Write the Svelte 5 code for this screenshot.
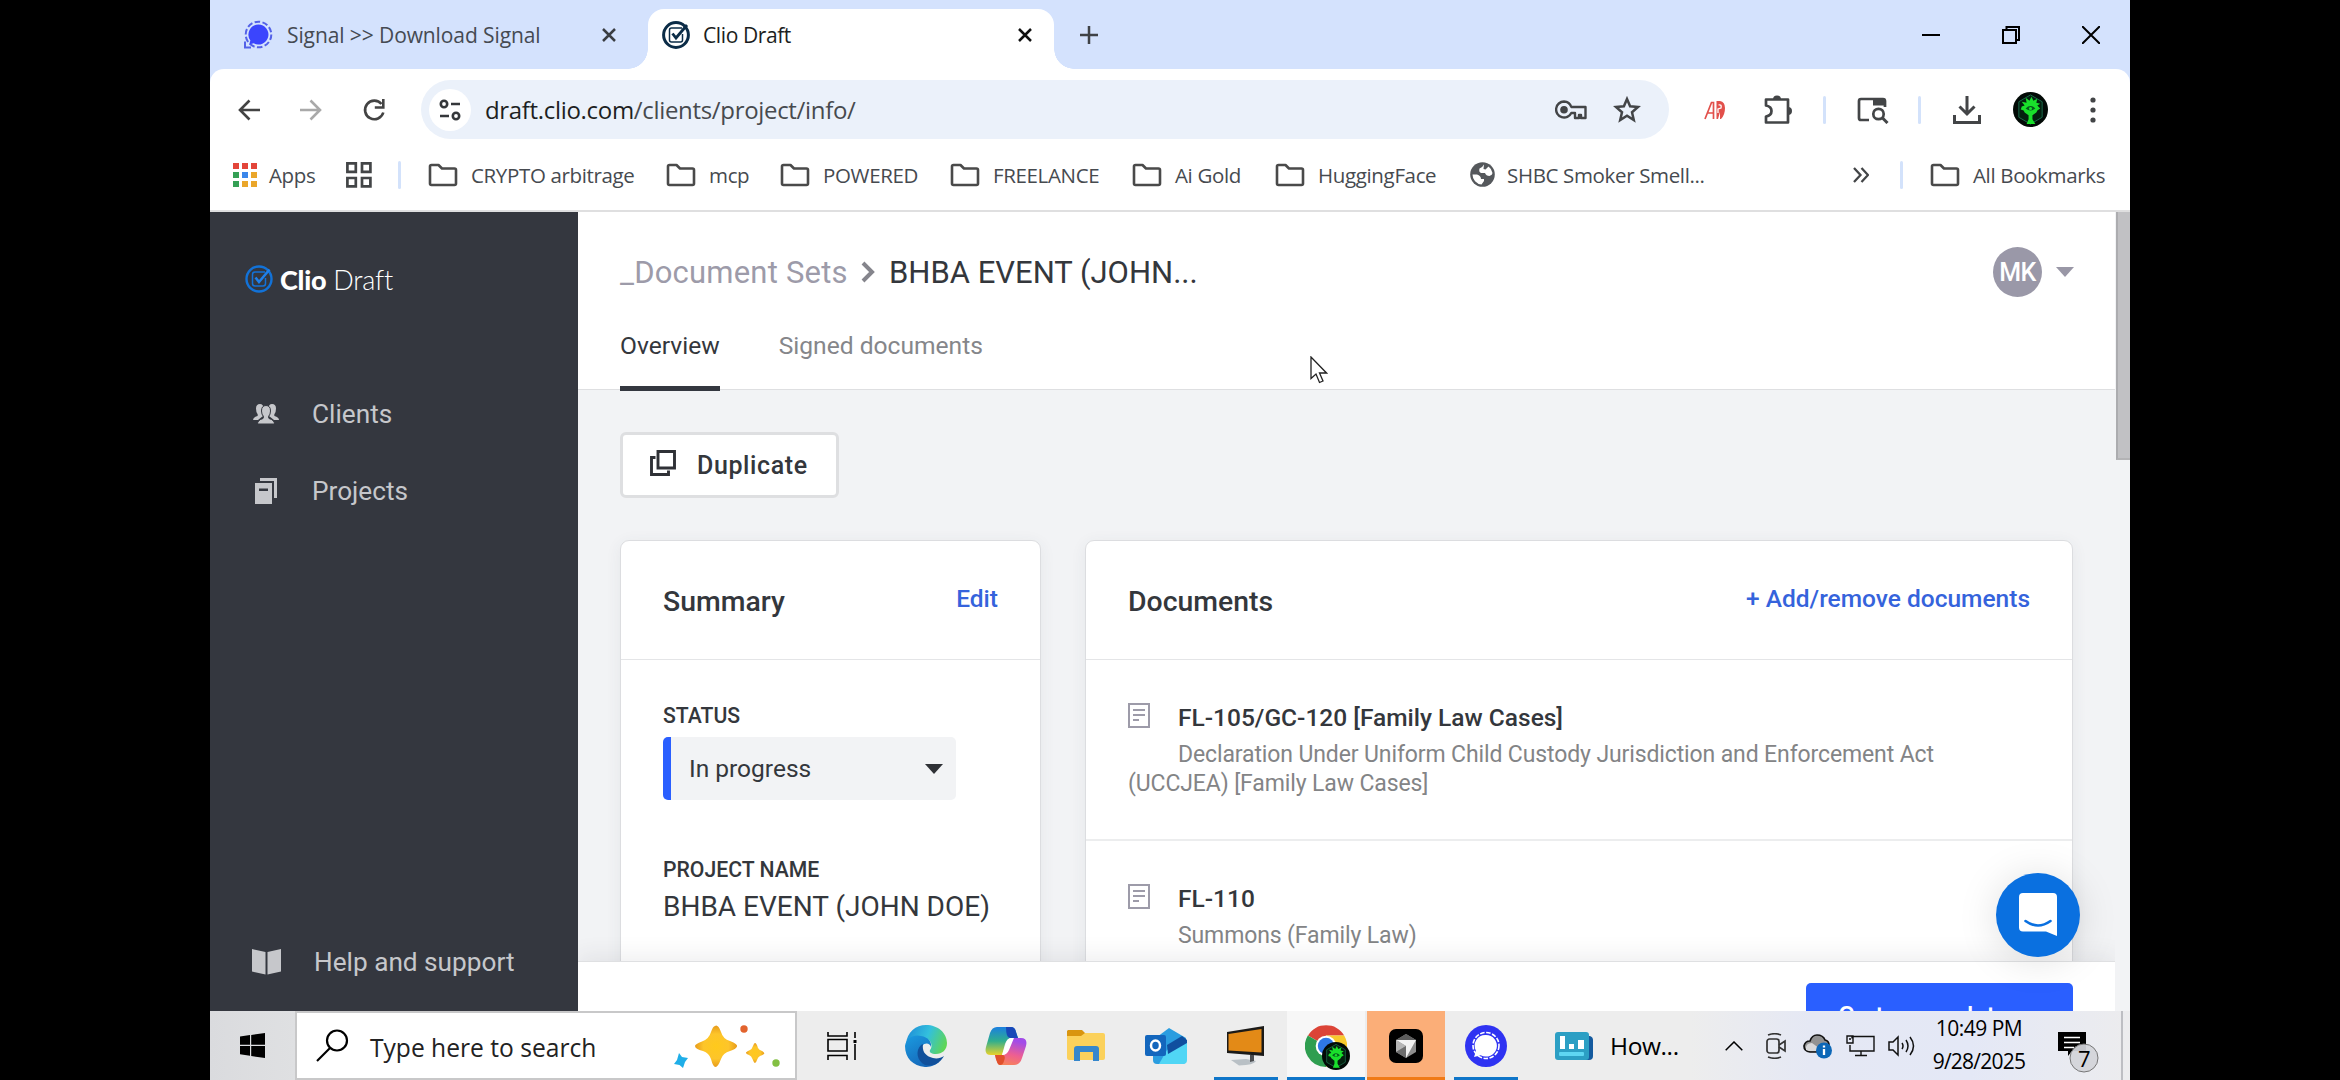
<script>
  const bookmarks = [
    { label: 'CRYPTO arbitrage', width: 238 },
    { label: 'mcp', width: 114 },
    { label: 'POWERED', width: 170 },
    { label: 'FREELANCE', width: 182 },
    { label: 'Ai Gold', width: 143 },
    { label: 'HuggingFace', width: 194 }
  ];

  const documents = [
    {
      title: 'FL-105/GC-120 [Family Law Cases]',
      text: 'Declaration Under Uniform Child Custody Jurisdiction and Enforcement Act (UCCJEA) [Family Law Cases]'
    },
    { title: 'FL-110', text: 'Summons (Family Law)' }
  ];

  const appColors = ['#e3453a', '#e3453a', '#e3453a', '#35a055', '#3b86ea', '#eaa62b', '#35a055', '#eaa62b', '#eaa62b'];
</script>

{#snippet folder()}
  <svg class="folder" width="30" height="24" viewBox="0 0 30 24">
    <path d="M2 3.5Q2 2 3.5 2H10.5L14 5.5H26.5Q28 5.5 28 7V20.5Q28 22 26.5 22H3.5Q2 22 2 20.5Z" fill="none" stroke="#4a4a4a" stroke-width="2.6" stroke-linejoin="round" />
  </svg>
{/snippet}

{#snippet tree(size)}
  <svg width={size} height={size} viewBox="0 0 36 36">
    <circle cx="18" cy="18" r="18" fill="#020a06" />
    <path d="M18 3 30 10V26L18 33 6 26V10Z" fill="#04200f" stroke="#1c6b4c" stroke-width="1" />
    <path d="M9 15 12 14 9 10 14 11 13 6 17 9 19 5 21 9 25 7 24 11 28 12 25 14 28 17 25 19 24 21 20 24 20 28 23 33 14 33 16 28 16 24 12 21 11 19 8 18Z" fill="#19e02b" />
    <path d="M13 17Q18 12 23 17Q18 21 13 17Z" fill="#055a1c" />
    <circle cx="18" cy="17" r="1.6" fill="#19e02b" />
  </svg>
{/snippet}

<div class="screen">
  <div class="window">
    <div class="tabstrip">
      <div class="tab">
        <svg class="fav" width="30" height="30" viewBox="0 0 30 30">
          <circle cx="15.5" cy="14.5" r="12.8" fill="none" stroke="#5361e8" stroke-width="2" stroke-dasharray="5.6 2.4" />
          <path d="M15.5 4.5a10 10 0 1 1-4.8 18.8L6.2 24.6 7.4 20.4A10 10 0 0 1 15.5 4.5Z" fill="#3b45fd" />
          <path d="M2 21.5V27.6H8" fill="none" stroke="#5361e8" stroke-width="2" />
        </svg>
        <span class="tab-title signal-title">Signal &gt;&gt; Download Signal</span>
        <svg class="tab-x" width="14" height="14" viewBox="0 0 14 14"><path d="M1 1 13 13M13 1 1 13" stroke="#3a3d42" stroke-width="2.5" /></svg>
      </div>
      <div class="tab active">
        <svg class="fav" width="28" height="28" viewBox="0 0 28 28">
          <circle cx="14" cy="14" r="12.400" fill="#fff" stroke="#0b2c47" stroke-width="3" />
          <path d="M20 7H9.500Q7.500 7 7.500 9V19Q7.500 21 9.500 21H18.500Q20.500 21 20.500 19V13" fill="none" stroke="#0b2c47" stroke-width="1.500" />
          <path d="M10.500 12.500 14 17 25 4" fill="none" stroke="#0b2c47" stroke-width="2.800" />
        </svg>
        <span class="tab-title clio-title">Clio Draft</span>
        <svg class="tab-x" width="14" height="14" viewBox="0 0 14 14"><path d="M1 1 13 13M13 1 1 13" stroke="#111" stroke-width="2.5" /></svg>
      </div>
      <svg class="newtab" width="18" height="18" viewBox="0 0 18 18"><path d="M9 0V18M0 9H18" stroke="#3f4246" stroke-width="2.5" /></svg>
      <div class="winctl">
        <svg width="18" height="18" viewBox="0 0 18 18"><path d="M0 9H18" stroke="#000" stroke-width="2" /></svg>
        <svg width="18" height="18" viewBox="0 0 18 18"><path d="M1 4H14V17H1ZM4.5 4V1H17V14H14" fill="none" stroke="#000" stroke-width="2" /></svg>
        <svg width="18" height="18" viewBox="0 0 18 18"><path d="M0 0 18 18M18 0 0 18" stroke="#000" stroke-width="2" /></svg>
      </div>
    </div>

    <div class="toolbar">
      <div class="navrow">
        <svg class="back" width="22" height="22" viewBox="0 0 22 22"><path d="M22 11H2M11.5 1.5 2 11 11.5 20.5" fill="none" stroke="#434343" stroke-width="2.6" /></svg>
        <svg class="forward" width="22" height="22" viewBox="0 0 22 22"><path d="M0 11H20M10.500 1.500 20 11 10.500 20.500" fill="none" stroke="#a9a9a9" stroke-width="2.6" /></svg>
        <svg class="reload" width="24" height="24" viewBox="0 0 24 24">
          <path d="M19.500 6A9.300 9.300 0 1 0 21.300 14.500" fill="none" stroke="#434343" stroke-width="2.6" />
          <path d="M21.300 1V9.500H12.800" fill="none" stroke="#434343" stroke-width="2.600" />
        </svg>
        <div class="omnibox">
          <span class="site">
            <svg width="22" height="22" viewBox="0 0 22 22" fill="none" stroke="#34373a" stroke-width="2.600">
              <circle cx="5" cy="5" r="3.200" /><path d="M12 5H21M1 17H10" /><circle cx="17" cy="17" r="3.200" />
            </svg>
          </span>
          <span class="url"><b>draft.clio.com</b>/clients/project/info/</span>
          <svg class="key" width="32" height="20" viewBox="0 0 32 20">
            <path d="M9 1.500a8 8 0 1 0 7.300 11.500H20V18H24V15H26V18H30.500V7H16.300A8 8 0 0 0 9 1.500Z" fill="none" stroke="#434547" stroke-width="2.400" stroke-linejoin="round" />
            <circle cx="9" cy="9.800" r="3.800" fill="#434547" />
          </svg>
          <svg class="star" width="28" height="27" viewBox="0 0 28 27"><path d="M14 3 17.100 10.300 25 11 19 16.200 20.800 24 14 19.800 7.200 24 9 16.200 3 11 10.900 10.300Z" fill="none" stroke="#434547" stroke-width="2.500" /></svg>
        </div>
        <svg class="ext" width="22" height="20" viewBox="0 0 22 20">
          <path d="M1 19 7.500 2.500H9.500V19M4 13H9" fill="none" stroke="#e2504b" stroke-width="1.700" />
          <path d="M12.500 1H16Q21 2 21 8Q21 15 17 19H16V12L14 19H12.500Z" fill="#e2504b" />
          <path d="M14.500 5Q18 4 17 8L14 9V13" fill="none" stroke="#fff" stroke-width="1.300" />
        </svg>
        <svg class="puzzle" width="32" height="30" viewBox="0 0 32 30">
          <path d="M3 4.500H25V27.500H3V21.500Q8.500 20.500 8.500 16Q8.500 11.500 3 10.500Z" fill="none" stroke="#434547" stroke-width="2.700" stroke-linejoin="round" />
          <path d="M10 4.500a4 4 0 0 1 8 0ZM25 12a4 4 0 0 1 0 8Z" fill="#434547" />
        </svg>
        <i class="divider"></i>
        <svg class="tabsearch" width="32" height="28" viewBox="0 0 32 28">
          <path d="M12 24H4Q2 24 2 22V5Q2 3 4 3H26Q28 3 28 5V11" fill="none" stroke="#434547" stroke-width="2.700" />
          <path d="M16 3H28V9.500H16Z" fill="#434547" />
          <circle cx="21.500" cy="18" r="5.200" fill="none" stroke="#434547" stroke-width="2.700" />
          <path d="M25.300 21.800 30.500 27" stroke="#434547" stroke-width="3" />
        </svg>
        <i class="divider two"></i>
        <svg class="download" width="28" height="28" viewBox="0 0 28 28"><path d="M14 0V17M6.500 10.500 14 18 21.500 10.500M1.500 19V26.500H26.500V19" fill="none" stroke="#434547" stroke-width="3" /></svg>
        <span class="profile">{@render tree(35)}</span>
        <svg class="dots" width="6" height="26" viewBox="0 0 6 26" fill="#434547"><circle cx="3" cy="3" r="2.600" /><circle cx="3" cy="13" r="2.600" /><circle cx="3" cy="23" r="2.600" /></svg>
      </div>

      <div class="bookmarks">
        <svg class="apps" width="24" height="24" viewBox="0 0 24 24">
          {#each appColors as color, i}
            <rect x={(i % 3) * 9} y={Math.floor(i / 3) * 9} width="6" height="6" fill={color} />
          {/each}
        </svg>
        <span class="bm-text apps-text">Apps</span>
        <svg class="quad" width="26" height="26" viewBox="0 0 26 26" fill="none" stroke="#434547" stroke-width="2.700"><path d="M1.400 1.400H9.800V9.800H1.400ZM16 1.400H24.400V9.800H16ZM1.400 16H9.800V24.400H1.400ZM16 16H24.400V24.400H16Z" /></svg>
        <i class="divider bm"></i>
        {#each bookmarks as item}
          <span class="bookmark" style:width="{item.width}px">{@render folder()}<span class="bm-text">{item.label}</span></span>
        {/each}
        <svg class="globe" width="25" height="25" viewBox="0 0 25 25">
          <circle cx="12.500" cy="12.500" r="12.300" fill="#55585c" />
          <path d="M14 2.500Q12 6 9.500 6.500Q8.500 10 11 11H15Q16 14 19.500 14Q22.500 13 22.500 11A10 10 0 0 0 18.500 4.500L15.500 7.500L13.500 7Z M2.500 12.500H7Q11 13.500 11 17H14V19L11.500 22.500A10 10 0 0 1 2.500 12.500Z" fill="#fff" />
        </svg>
        <span class="bm-text shbc">SHBC Smoker Smell...</span>
        <svg class="more" width="16" height="16" viewBox="0 0 16 16"><path d="M1 1 7.500 8 1 15M8.500 1 15 8 8.500 15" fill="none" stroke="#434547" stroke-width="2.300" /></svg>
        <i class="divider all"></i>
        <span class="bookmark">{@render folder()}<span class="bm-text">All Bookmarks</span></span>
      </div>
    </div>

    <div class="page">
      <aside>
        <div class="logo">
          <svg width="28" height="28" viewBox="0 0 28 28">
            <circle cx="14" cy="14" r="12.500" fill="none" stroke="#1272d8" stroke-width="2.400" />
            <path d="M20 7H10Q7.500 7 7.500 9.500V18.500Q7.500 21 10 21H18Q20.500 21 20.500 18.500V13" fill="none" stroke="#1272d8" stroke-width="1.500" />
            <path d="M10.500 12.500 14 17 24.500 4.500" fill="none" stroke="#1f80ea" stroke-width="2.600" />
          </svg>
          <span class="brand"><b>Clio</b> Draft</span>
        </div>
        <div class="side-item">
          <svg width="26" height="20" viewBox="0 0 26 20" fill="#c6c7cb">
            <path d="M7 0Q10.500 0 10.500 4.500Q10 8 9 9.500L10 12 5 16H0Q0 13.500 4.500 12Q5 11 4.500 10Q3 8 3 4.500Q3 0 7 0ZM19 0Q15.500 0 15.500 4.500Q16 8 17 9.500L16 12 21 16H26Q26 13.500 21.500 12Q21 11 21.500 10Q23 8 23 4.500Q23 0 19 0Z" />
            <path d="M13 1.500Q17.500 1.500 17.500 7Q17.500 10.500 15.500 12.500Q15.500 14 16 14.500Q21.500 16 21.500 20H4.500Q4.500 16 10 14.500Q10.500 14 10.500 12.500Q8.500 10.500 8.500 7Q8.500 1.500 13 1.500Z" stroke="#34373f" stroke-width="1" />
          </svg>
          <span>Clients</span>
        </div>
        <div class="side-item">
          <svg width="26" height="26" viewBox="0 0 26 26" fill="#c6c7cb">
            <path d="M7 0H24V20H21V3H7Z" /><path d="M2 5H19V26H2Z" /><path d="M6 10.500H15V13H6Z" fill="#34373f" />
          </svg>
          <span>Projects</span>
        </div>
        <div class="side-item help">
          <svg width="29" height="26" viewBox="0 0 29 26" fill="#c6c7cb"><path d="M0 0 13.500 3V25.500L0 22.500ZM29 0 15.500 3V25.500L29 22.500Z" /></svg>
          <span>Help and support</span>
        </div>
      </aside>

      <main>
        <header>
          <div class="crumbs">
            <span class="parent">_Document Sets</span>
            <svg width="14" height="22" viewBox="0 0 14 22"><path d="M2 2 11 11 2 20" fill="none" stroke="#85858c" stroke-width="4" /></svg>
            <span class="current">BHBA EVENT (JOHN...</span>
            <span class="initials">MK</span>
            <svg class="acct" width="18" height="10" viewBox="0 0 18 10"><path d="M0 0H18L9 10Z" fill="#9997a6" /></svg>
          </div>
          <nav>
            <span class="navtab on">Overview</span>
            <span class="navtab">Signed documents</span>
          </nav>
        </header>

        <section class="content">
          <button class="duplicate">
            <svg width="26" height="26" viewBox="0 0 26 26" fill="none" stroke="#2f3136" stroke-width="2.900"><path d="M8 1.500H24.500V18H8ZM5.500 7.500H1.500V24.500H18.500V20.500" /></svg>
            <span>Duplicate</span>
          </button>
          <div class="cards">
            <div class="card">
              <div class="card-head"><h2 class="sum">Summary</h2><span class="link">Edit</span></div>
              <div class="summary">
                <div class="label">STATUS</div>
                <div class="select"><span>In progress</span><svg width="18" height="10" viewBox="0 0 18 10"><path d="M0 0H18L9 10Z" fill="#2f3136" /></svg></div>
                <div class="label name">PROJECT NAME</div>
                <div class="value">BHBA EVENT (JOHN DOE)</div>
              </div>
            </div>
            <div class="card">
              <div class="card-head"><h2>Documents</h2><span class="link">+ Add/remove documents</span></div>
              {#each documents as doc}
                <div class="doc">
                  <div class="doc-title">
                    <svg width="22" height="25" viewBox="0 0 22 25" fill="none" stroke="#9d9ba9" stroke-width="2"><path d="M1 1H21V24H1ZM5 7H17M5 12H17M5 17H11" /></svg>
                    <span>{doc.title}</span>
                  </div>
                  <p>{doc.text}</p>
                </div>
              {/each}
            </div>
          </div>
        </section>

        <footer><button class="primary">Go to complete</button></footer>

        <div class="chat">
          <svg width="38" height="44" viewBox="0 0 38 44">
            <path d="M4 0H34Q38 0 38 4V43L27 38.500H4Q0 38.500 0 34.500V4Q0 0 4 0Z" fill="#fff" />
            <path d="M6.500 28Q19 37 31.500 28" fill="none" stroke="#0a70e0" stroke-width="2.600" stroke-linecap="round" />
          </svg>
        </div>
        <svg class="pointer" width="18" height="28" viewBox="0 0 18 28"><path d="M1 1V22.500L6 18 9.500 26.500 13 25 9.500 17H16.500Z" fill="#fff" stroke="#222" stroke-width="1.300" /></svg>
      </main>
      <div class="scrollbar"><i></i></div>
    </div>

    <div class="taskbar">
      <div class="start">
        <svg width="25" height="25" viewBox="0 0 25 25"><path d="M0 3.500 10 2V11.700H0ZM11.200 1.900 25 0V11.700H11.200ZM0 13H10V22.800L0 21.300ZM11.200 13H25V25L11.200 23Z" /></svg>
      </div>
      <div class="search">
        <svg width="33" height="33" viewBox="0 0 33 33" fill="none" stroke="#000" stroke-width="2.200"><circle cx="21" cy="11.500" r="10" /><path d="M14 19 1 32" /></svg>
        <span>Type here to search</span>
        <svg class="sparkles" width="106" height="44" viewBox="0 0 106 44">
          <defs><radialGradient id="spark"><stop offset="0" stop-color="#ffc91c" /><stop offset=".6" stop-color="#fdc52a" /><stop offset="1" stop-color="#e79b1c" /></radialGradient></defs>
          <path d="M41 2Q44 0 47 8Q49 15 56 17Q64 20 63 22.500Q62 25 56 27Q49 29 47 35Q44 43 41.500 43Q39 43 37 35Q35 29 29 27Q21 25 21 22Q21 20 28 17.500Q35 15 37 8Q39 2 41 2Z" fill="url(#spark)" />
          <path d="M81 19Q82.500 19 84 24Q85 26 88 27Q91 28.500 90 30Q89 31 86 32Q84 33 83 36Q82 39 81 39Q80 39 78.500 35Q77.500 32 75 31Q71.500 30 72 28.500Q73 27 76 26Q78 25 79 22Q80 19 81 19Z" fill="url(#spark)" />
          <path d="M5 29 8 33 14 34 11 38 9 44 5.500 41 0 40 3 36Z" fill="#1faee8" />
          <circle cx="70" cy="5" r="3.700" fill="#e2632d" /><circle cx="102" cy="39" r="3.700" fill="#83c043" />
        </svg>
      </div>
      <div class="app taskview">
        <svg width="30" height="28" viewBox="0 0 30 28" fill="none" stroke="#000" stroke-width="1.600"><path d="M1 0V4H20V0M1 7.500H20V19H1ZM1 28V23.500H20V28M28 0V6M28 12V28" /><rect x="26.500" y="8" width="3" height="3" fill="#000" stroke="none" /></svg>
      </div>
      <div class="app">
        <svg width="42" height="42" viewBox="0 0 42 42">
          <defs>
            <linearGradient id="edgeTop" x1="0" y1=".3" x2="1" y2=".6"><stop offset="0" stop-color="#1f8fd8" /><stop offset=".5" stop-color="#33c0dd" /><stop offset="1" stop-color="#5fd654" /></linearGradient>
            <linearGradient id="edgeLow" x1="0" y1="0" x2=".6" y2="1"><stop offset="0" stop-color="#1b9be0" /><stop offset="1" stop-color="#1566b8" /></linearGradient>
          </defs>
          <path d="M1 19C2 7 11 0 21 0C33 0 42 8 42 18C42 25 37 29 31 29C26 29 24 27 25 25C28 22 27 14 19 13C11 12 4 15 1 19Z" fill="url(#edgeTop)" />
          <path d="M0 21C1 13 9 9 16 11C23 12 27 17 26 22C25 18 20 17 17 21C12 30 20 38 34 37C30 41 24 42 20 42C8 41 0 33 0 21Z" fill="url(#edgeLow)" />
          <path d="M16 20C10 26 12 36 20 40C29 42 36 37 39 31C35 34 29 34 25 32C20 30 17 26 18 19Z" fill="#11509b" />
        </svg>
      </div>
      <div class="app">
        <svg width="42" height="38" viewBox="0 0 42 38">
          <defs>
            <linearGradient id="copA" x1="0" y1="0" x2="0" y2="1"><stop offset="0" stop-color="#1b7fe0" /><stop offset=".5" stop-color="#2fae8e" /><stop offset="1" stop-color="#e9d22a" /></linearGradient>
            <linearGradient id="copB" x1=".3" y1="0" x2="0" y2="1"><stop offset="0" stop-color="#a24be8" /><stop offset=".5" stop-color="#ee5f91" /><stop offset="1" stop-color="#f98b4c" /></linearGradient>
          </defs>
          <path d="M12 0H26Q30 0 31 5L33 11H26Q22 11 20 17L17 28H6Q-1 28 1 20L5 6Q7 0 12 0Z" fill="url(#copA)" />
          <path d="M21 0H26Q30 0 31 5L33 11H25Q21 11 21 0Z" fill="#1848b8" />
          <path d="M28 11H36Q43 11 41 19L37 31Q35 38 29 38H15Q12 38 10 28H17Q21 28 23 23Z" fill="url(#copB)" />
          <path d="M10 28H18Q21 29 19 34Q18 38 15 38Q12 38 10 28Z" fill="#e0502c" />
          <path d="M26 11H29L24 23Q22 28 17 28L21 16Q23 11 26 11Z" fill="#fff" />
        </svg>
      </div>
      <div class="app">
        <svg width="38" height="32" viewBox="0 0 38 32">
          <path d="M1 0H15L19 4V9H0V1Z" fill="#d9950f" /><path d="M0 6H14L18 3H36Q38 3 38 5V28Q38 30 36 30H2Q0 30 0 28Z" fill="#fbd15b" />
          <path d="M7 31V19Q7 16 10 16H29Q32 16 32 19V31H26V22H13V31Z" fill="#3587cc" />
        </svg>
      </div>
      <div class="app">
        <svg width="42" height="36" viewBox="0 0 42 36">
          <path d="M8 12 24 0 41 10V32Q41 36 37 36H12Q8 36 8 32Z" fill="#2a9de0" /><path d="M22 22 42 12V32Q42 36 38 36H14Z" fill="#50d6f5" /><path d="M22 17 37 8 42 12V15L23 26Z" fill="#104f9f" />
          <rect y="7" width="21" height="21" rx="2" fill="#1366bd" /><ellipse cx="10.500" cy="17.500" rx="4.500" ry="5" fill="none" stroke="#fff" stroke-width="2.500" />
        </svg>
      </div>
      <div class="app running">
        <svg width="40" height="42" viewBox="0 0 40 42">
          <path d="M1 7 38 1V31L1 28Z" fill="#1b1a18" /><path d="M2.500 9 35.500 4V27.500L2.500 25.500Z" fill="#e38a17" />
          <path d="M5 35 20 34 30 36Q28 40 13 40.500Z" fill="#b9c0c5" /><path d="M24 30H28V36L24 37Z" fill="#4b4d50" />
        </svg>
      </div>
      <div class="app chrome">
        <span class="stack">
          <svg width="42" height="42" viewBox="0 0 42 42">
            <path d="M21 21 3 10.500A21 21 0 0 1 39.200 10.500H21Z" fill="#dc4437" /><path d="M21 21 2.800 10.500A21 21 0 0 0 21 42L30 26Z" fill="#2f9e50" /><path d="M21 10.500H39.200A21 21 0 0 1 21 42L30 26Z" fill="#f7ca2d" />
            <circle cx="21" cy="21" r="10.300" fill="#fff" /><circle cx="21" cy="21" r="8.200" fill="#2e78e6" />
          </svg>
          <span class="chrome-badge">{@render tree(28)}</span>
        </span>
      </div>
      <div class="app editor">
        <svg width="34" height="34" viewBox="0 0 34 34">
          <rect width="34" height="34" rx="7" /><path d="M17 5 27 11V23L17 29 7 23V11Z" fill="#8d8d8d" /><path d="M7 11 17 5 27 11Z" fill="#5c5c5c" /><path d="M7 11H27L17 29V17Z" fill="#f2f2f2" /><path d="M7 11V23L17 17Z" fill="#b5b5b5" /><path d="M7 23 17 17V29Z" fill="#6d6d6d" />
        </svg>
      </div>
      <div class="app running">
        <svg width="42" height="42" viewBox="0 0 42 42">
          <circle cx="21" cy="21" r="21" fill="#2f33f2" /><circle cx="21" cy="20.500" r="13" fill="none" stroke="#fff" stroke-width="1.600" stroke-dasharray="4.500 1.600" />
          <path d="M21 10a10.800 10.800 0 1 1-5.200 20.200L9 32 11 26A10.800 10.800 0 0 1 21 10Z" fill="#fff" />
        </svg>
      </div>
      <div class="widget">
        <svg width="38" height="28" viewBox="0 0 38 28">
          <path d="M26 4H35Q38 5 38 8V24Q38 28 34 28H26Z" fill="#145a9e" /><rect width="34" height="28" rx="3" fill="#2c9fc4" />
          <path d="M5 4H10V17H5ZM14 12H19V17H14ZM23 8H29V17H23Z" fill="#fff" /><rect x="4" y="20" width="25" height="4" rx="1" fill="#5ed6f2" />
        </svg>
        <span>How...</span>
      </div>
      <div class="tray first"><svg width="18" height="10" viewBox="0 0 18 10"><path d="M.7 9.300 9 1 17.300 9.300" fill="none" stroke="#000" stroke-width="1.500" /></svg></div>
      <div class="tray">
        <svg width="20" height="26" viewBox="0 0 20 26" fill="none" stroke="#333" stroke-width="1.700"><rect x="1" y="6" width="12" height="14" rx="2.500" /><path d="M13 12 19 8V18L13 14M2 2Q9 -.5 15 2M2 24Q9 26.500 15 24" /></svg>
      </div>
      <div class="tray">
        <svg width="30" height="26" viewBox="0 0 30 26">
          <path d="M7 19Q1 18 1 13Q2 8 7 8Q9 2 14 2Q20 2 22 7Q26 8 26 12V19Z" fill="#929292" stroke="#111" stroke-width="1.700" /><path d="M3 17Q2 10 9 10L20 18H6Z" fill="#d8d8da" />
          <circle cx="21" cy="17.500" r="8" fill="#0c67b7" /><path d="M21 12.500V14.500M21 16V22" stroke="#fff" stroke-width="2.300" />
        </svg>
      </div>
      <div class="tray">
        <svg width="29" height="22" viewBox="0 0 29 22" fill="none" stroke="#111" stroke-width="1.400"><path d="M6 3.500V1.500H28V16H4V10M15 16V20.500M9 20.500H21M1 1H7V8H1ZM3 4H5" /></svg>
      </div>
      <div class="tray">
        <svg width="28" height="22" viewBox="0 0 28 22" fill="none" stroke="#111" stroke-width="1.500"><path d="M1 7H5L10 2V20L5 15H1ZM14 8Q16 11 14 14M18 5Q22 11 18 17M22 2Q29 11 22 20" /></svg>
      </div>
      <div class="clock"><span class="time">10:49 PM</span><span class="date">9/28/2025</span></div>
      <div class="notify">
        <svg width="44" height="44" viewBox="0 0 44 44">
          <path d="M1 3H29V22H15L11 27V22H1Z" /><path d="M7 8.500H23M7 13.500H23M7 18.500H17" stroke="#fff" stroke-width="1.500" />
          <circle cx="27" cy="29" r="14" fill="#d3d4d9" fill-opacity=".93" stroke="#777" stroke-width="1" />
        </svg>
        <span>7</span>
      </div>
      <i class="edge"></i>
    </div>
  </div>
</div>

<style>
  :global(body) { margin: 0; background: #000; overflow: hidden; }
  * { box-sizing: border-box; }
  svg { display: block; flex: none; }
  .screen { width: 2340px; height: 1080px; background: #000; display: flex; justify-content: center; font-family: 'Open Sans', 'Noto Sans', sans-serif; }
  .window { width: 1920px; height: 1080px; display: flex; flex-direction: column; overflow: hidden; background: #d4e2fd; white-space: nowrap; }

  .tabstrip { height: 69px; flex: none; display: flex; align-items: center; }
  .tab { width: 438px; height: 69px; display: flex; align-items: center; padding-left: 33px; }
  .tab-title { font-size: 21px; line-height: 30px; margin-left: 14px; color: #454a52; }
  .signal-title { width: 315px; letter-spacing: -.1px; }
  .tab.active { width: 406px; height: 60px; margin-top: 9px; padding: 0 0 9px 14px; background: #fff; border-radius: 16px 16px 0 0; position: relative; }
  .tab.active::before, .tab.active::after { content: ''; position: absolute; bottom: 0; width: 20px; height: 20px; }
  .tab.active::before { left: -20px; background: radial-gradient(circle at 0 0, transparent 19.500px, #fff 20px); }
  .tab.active::after { right: -20px; background: radial-gradient(circle at 100% 0, transparent 19.500px, #fff 20px); }
  .clio-title { width: 315px; margin-left: 13px; color: #1c1e21; letter-spacing: -.4px; }
  .newtab { margin-left: 26px; }
  .winctl { margin-left: auto; padding-right: 30px; display: flex; gap: 62px; }

  .toolbar { height: 143px; flex: none; background: #fff; border-radius: 14px 14px 0 0; border-bottom: 2px solid #dfdfe0; padding-top: 11px; }
  .navrow { height: 59px; display: flex; align-items: center; }
  .back { margin-left: 28px; }
  .forward { margin-left: 40px; }
  .reload { margin-left: 40px; }
  .omnibox { width: 1248px; height: 59px; margin-left: 35px; border-radius: 30px; background: #ebf1fa; display: flex; align-items: center; padding-left: 8px; }
  .site { width: 42px; height: 42px; border-radius: 50%; background: #fff; display: grid; place-items: center; }
  .url { margin-left: 14px; font-size: 24px; line-height: 34px; width: 1070px; color: #474a4e; letter-spacing: -.32px; }
  .url b { font-weight: 400; color: #1d1f22; }
  .star { margin-left: 26px; }
  .ext { margin-left: 35px; }
  .puzzle { margin-left: 37px; }
  .divider { width: 3px; height: 28px; border-radius: 2px; background: #d3e2fb; margin-left: 28px; flex: none; }
  .tabsearch { margin-left: 31px; }
  .divider.two { margin-left: 29px; }
  .download { margin-left: 32px; }
  .profile { margin-left: 32px; }
  .dots { margin-left: 42px; }

  .bookmarks { height: 71px; display: flex; align-items: center; padding-left: 23px; }
  .bm-text { font-size: 20.500px; line-height: 28px; color: #464a4f; letter-spacing: -.35px; }
  .apps-text { width: 77px; margin-left: 12px; }
  .divider.bm { margin-left: 26px; margin-right: 27px; }
  .bookmark { display: flex; align-items: center; gap: 13px; }
  .globe { margin-left: 1px; }
  .shbc { margin-left: 12px; width: 346px; }
  .divider.all { margin: 0 27px 0 31px; }

  .page { height: 799px; flex: none; display: flex; font-family: Roboto, sans-serif; }
  aside { width: 368px; background: #34373f; display: flex; flex-direction: column; color: #c6c7cb; }
  .logo { height: 134px; margin-bottom: 29px; padding-left: 35px; display: flex; align-items: center; gap: 7px; }
  .brand { font-family: Lato, sans-serif; font-size: 27px; font-weight: 300; color: #fff; letter-spacing: -.25px; }
  .brand b { font-weight: 900; }
  .side-item { height: 77px; padding-left: 43px; display: flex; align-items: center; gap: 33px; font-size: 26.200px; }
  .side-item.help { height: 98px; margin-top: auto; padding-left: 42px; gap: 33px; }

  main { width: 1537px; background: #f2f3f5; display: flex; flex-direction: column; position: relative; color: #34373c; }
  header { height: 178px; flex: none; background: #fff; border-bottom: 1px solid #dedfe1; padding: 0 42px; }
  .crumbs { height: 120px; display: flex; align-items: center; font-size: 31px; gap: 14px; }
  .parent { color: #9d9ba9; width: 227px; letter-spacing: .2px; }
  .initials { width: 49px; height: 50px; margin-left: auto; border-radius: 50%; background: #9a98a8; color: #fff; font-size: 25px; font-weight: 500; display: grid; place-items: center; letter-spacing: -.5px; }
  .acct { margin-right: -1px; }
  nav { display: flex; gap: 59px; font-size: 24.600px; line-height: 28px; }
  .navtab { height: 59px; color: #85868a; }
  .navtab.on { color: #34373c; border-bottom: 5px solid #34373f; }
  .content { height: 571px; flex: none; padding: 42px 42px 0; overflow: hidden; }
  button { font: inherit; }
  .duplicate { width: 219px; height: 66px; display: flex; align-items: center; gap: 21px; padding: 0 0 0 27px; background: #fff; border: 3px solid #dedfe1; border-radius: 6px; font-size: 25px; font-weight: 500; letter-spacing: .6px; color: #34373c; }
  .duplicate svg { margin-bottom: 4px; }
  .cards { display: grid; grid-template-columns: 421px 988px; gap: 44px; margin-top: 42px; }
  .card { height: 600px; background: #fff; border: 1px solid #dcdde0; border-radius: 9px; box-shadow: 0 3px 16px rgba(60, 65, 80, .07); }
  .card-head { height: 119px; border-bottom: 1px solid #e4e5e7; padding: 0 42px; display: flex; align-items: center; justify-content: space-between; }
  h2 { margin: 2px 0 0; font-size: 28.400px; font-weight: 500; }
  .link { color: #3563dc; font-size: 24.500px; font-weight: 500; margin-bottom: 3px; }
  .summary { padding: 43px 42px 0; }
  .label { font-size: 21.200px; line-height: 26px; font-weight: 500; }
  .select { width: 293px; height: 63px; margin-top: 8px; border-left: 8px solid #2a5fff; border-radius: 5px; background: #f2f3f5; display: flex; align-items: center; justify-content: space-between; padding: 0 13px 0 18px; font-size: 24.500px; }
  .name { margin-top: 57px; }
  .value { margin-top: 7px; font-size: 28px; line-height: 34px; }
  .doc { padding: 43px 42px 41px; border-bottom: 2px solid #ecedee; }
  .doc-title { display: flex; align-items: flex-start; gap: 28px; font-size: 24.500px; line-height: 30px; font-weight: 500; }
  p { margin: 7px 0 0; font-size: 23px; line-height: 29px; color: #838486; text-indent: 50px; white-space: normal; letter-spacing: -.12px; }
  footer { height: 50px; flex: none; background: #fff; border-top: 1px solid #dfe0e2; box-shadow: 0 -6px 22px rgba(50, 55, 70, .08); display: flex; justify-content: flex-end; align-items: flex-start; padding: 21px 42px 0; overflow: hidden; clip-path: inset(-40px 0 0 0); }
  .primary { width: 267px; height: 66px; flex: none; border: 0; border-radius: 5px; background: #2a5fff; color: #fff; font-size: 25px; font-weight: 500; text-align: left; padding: 0 0 0 32px; }
  .chat { position: absolute; left: 1418px; top: 661px; width: 84px; height: 84px; border-radius: 50%; background: #0a70e0; display: grid; place-items: center; box-shadow: 0 3px 40px rgba(0, 0, 0, .13); }
  .pointer { position: absolute; left: 732px; top: 144px; }
  .scrollbar { width: 15px; background: #f2f3f5; padding-left: 1px; }
  .scrollbar i { display: block; width: 14px; height: 248px; background: #c1c1c4; border-left: 2px solid #acacaf; border-bottom: 2px solid #b3b3b5; }

  .taskbar { height: 69px; flex: none; display: flex; align-items: center; color: #000; background: linear-gradient(90deg, #dadbde 0, #dfe0e2 85px, #ededed 590px, #ededed 1480px, #e5e8f4 1600px, #e4e8f6 1760px, #ececee 1920px); }
  .start { width: 85px; display: grid; place-items: center; }
  .search { width: 502px; height: 69px; background: #fff; border: 2px solid #c8c8c9; display: flex; align-items: center; padding-left: 19px; }
  .search span { font-size: 24.600px; margin-left: 21px; width: 304px; color: #222; padding-top: 3px; letter-spacing: 0; }
  .app { width: 80px; height: 69px; display: grid; place-items: center; position: relative; }
  .taskview { width: 89px; }
  .running::after, .chrome::after, .editor::after { content: ''; position: absolute; bottom: 0; left: 8px; width: 64px; height: 3px; background: #0f76c9; }
  .chrome::before, .editor::before { content: ''; position: absolute; inset: 0 1px; background: #f7f7f7; }
  .chrome::after, .editor::after { left: 1px; width: 78px; }
  .chrome > *, .editor > * { position: relative; }
  .editor::before { background: #fbae78; }
  .editor::after { background: #f07a16; }
  .chrome-badge { position: absolute; left: 17px; top: 17px; }
  .widget { width: 186px; padding-left: 29px; display: flex; align-items: center; gap: 17px; font-size: 24.500px; letter-spacing: -.4px; }
  .tray { width: 42px; display: grid; place-items: center; }
  .tray.first { width: 43px; }
  .clock { width: 112px; text-align: center; font-size: 21px; line-height: 33px; display: flex; flex-direction: column; letter-spacing: -.5px; padding-bottom: 1px; }
  .date { letter-spacing: -.75px; }
  .notify { width: 86px; position: relative; padding: 11px 0 0 22px; }
  .notify span { position: absolute; left: 43px; top: 25px; font-size: 22px; line-height: 30px; }
  .edge { width: 2px; height: 69px; background: #bdbec3; }
</style>
